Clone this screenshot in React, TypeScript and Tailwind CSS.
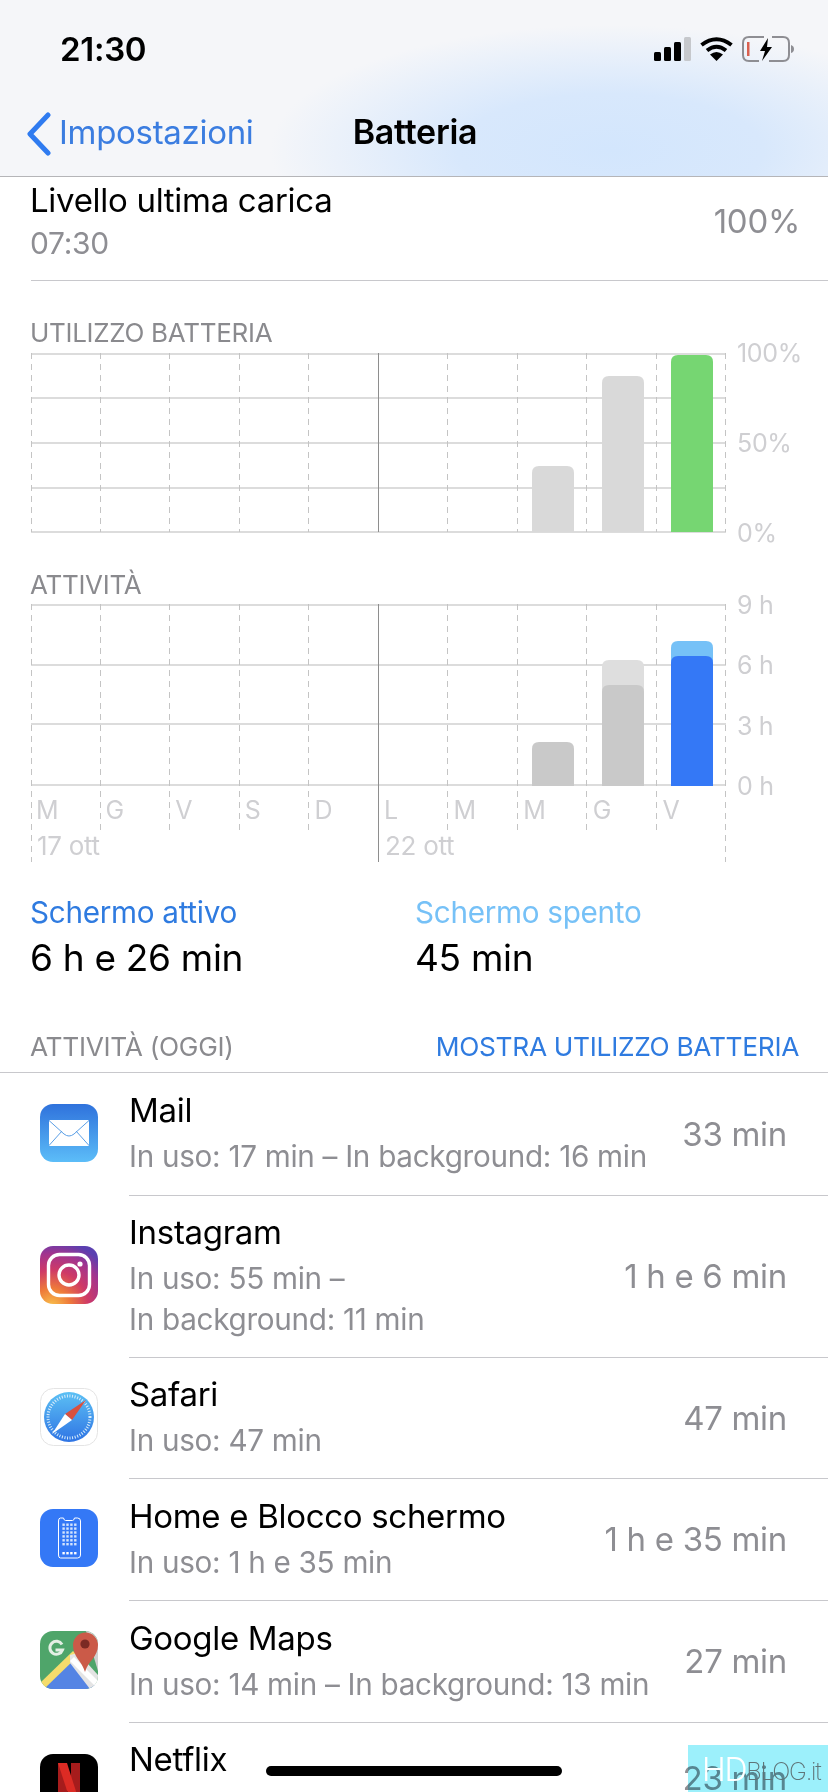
const days = ["M", "G", "V", "S", "D", "L", "M", "M", "G", "V"];

interface Bar {
  x: number;
  top: number;
  fill: string;
}

function Grid({ lines, bottom, tall }: { lines: number[]; bottom: number; tall?: boolean }) {
  return (
    <>
      {lines.map((y) => (
        <line key={y} x1="0" x2="695" y1={y} y2={y} stroke="#dcdcdc" strokeWidth="2" />
      ))}
      {Array.from({ length: 11 }).map((_, i) => {
        const x = Math.max(Math.round(i * 69.5) - 0.5, 0.5);
        const longLine = tall && (i === 0 || i === 10);
        if (i === 5) {
          return <line key={i} x1={x} x2={x} y1="0" y2={tall ? 258 : bottom} stroke="#8e8e8e" strokeWidth="1" />;
        }
        return (
          <line
            key={i}
            x1={x}
            x2={x}
            y1="0"
            y2={longLine ? 258 : tall ? 226 : bottom}
            stroke="#c4c4c4"
            strokeWidth="1"
            strokeDasharray="6 5"
          />
        );
      })}
    </>
  );
}

function BarShape({ x, top, fill, base }: Bar & { base: number }) {
  const r = 7;
  return (
    <path
      d={`M${x} ${base}V${top + r}Q${x} ${top} ${x + r} ${top}H${x + 42 - r}Q${x + 42} ${top} ${x + 42} ${top + r}V${base}Z`}
      fill={fill}
    />
  );
}

function BatteryChart() {
  return (
    <div className="flex h-[180px] pl-[31px]">
      <svg width="696" height="180" className="block shrink-0">
        <Grid lines={[1, 45, 90, 135, 179]} bottom={179} />
        <BarShape x={501} top={113} fill="#d9d9d9" base={179} />
        <BarShape x={571} top={23} fill="#d9d9d9" base={179} />
        <BarShape x={640} top={2} fill="#76d672" base={179} />
      </svg>
      <div className="ml-[10px] flex h-[202px] -mt-[11px] flex-col justify-between text-[25px] leading-[22px] text-[#cfcfd2]">
        <span>100%</span>
        <span>50%</span>
        <span>0%</span>
      </div>
    </div>
  );
}

function ActivityChart() {
  return (
    <div className="flex pl-[31px]">
      <div className="relative h-[258px] w-[696px] shrink-0">
        <svg width="696" height="258" className="absolute inset-0 block">
          <Grid lines={[1, 61, 120, 181]} bottom={258} tall />
          <BarShape x={501} top={138} fill="#c9c9c9" base={182} />
          <BarShape x={571} top={56} fill="#dedede" base={182} />
          <BarShape x={571} top={81} fill="#c9c9c9" base={182} />
          <BarShape x={640} top={37} fill="#76c1f7" base={182} />
          <BarShape x={640} top={52} fill="#3478f6" base={182} />
        </svg>
        <div className="relative grid grid-cols-10 pt-[191px] text-[25px] leading-[30px] text-[#cfcfd2]">
          {days.map((d, i) => (
            <span key={i} className="pl-[5px]">
              {d}
            </span>
          ))}
        </div>
        <div className="relative mt-[6px] grid grid-cols-2 text-[26px] leading-[30px] text-[#cfcfd2]">
          <span className="pl-[6px]">17 ott</span>
          <span className="pl-[6px]">22 ott</span>
        </div>
      </div>
      <div className="-mt-[10px] ml-[10px] flex h-[203px] flex-col justify-between text-[25px] leading-[22px] text-[#cfcfd2]">
        <span>9 h</span>
        <span>6 h</span>
        <span>3 h</span>
        <span>0 h</span>
      </div>
    </div>
  );
}

function MailIcon() {
  return (
    <svg viewBox="0 0 58 58" className="h-[58px] w-[58px]">
      <defs>
        <linearGradient id="mail" x1="0" y1="0" x2="0" y2="1">
          <stop offset="0" stopColor="#2f72dc" />
          <stop offset="1" stopColor="#5cbdf8" />
        </linearGradient>
      </defs>
      <rect width="58" height="58" rx="13" fill="url(#mail)" />
      <rect x="9" y="16" width="40" height="26" rx="1" fill="#fff" />
      <path d="M9 16.5L24 30Q29 34 34 30L49 16.5M9 41.5L22 27M49 41.5L36 27" fill="none" stroke="#5b9fe6" strokeWidth="1" />
    </svg>
  );
}

function InstagramIcon() {
  return (
    <svg viewBox="0 0 58 58" className="h-[58px] w-[58px]">
      <defs>
        <radialGradient id="ig" cx="0.2" cy="1.05" r="1.15">
          <stop offset="0" stopColor="#f9c34c" />
          <stop offset="0.28" stopColor="#ee7a3a" />
          <stop offset="0.55" stopColor="#cf3a66" />
          <stop offset="0.8" stopColor="#a2348f" />
          <stop offset="1" stopColor="#5a3fb0" />
        </radialGradient>
      </defs>
      <rect width="58" height="58" rx="13" fill="url(#ig)" />
      <rect x="8.5" y="8.5" width="41" height="41" rx="11" fill="none" stroke="#fff" strokeWidth="3.4" />
      <circle cx="29" cy="29" r="10" fill="none" stroke="#fff" strokeWidth="3.4" />
      <circle cx="40" cy="18" r="2.6" fill="#fff" />
    </svg>
  );
}

function SafariIcon() {
  return (
    <svg viewBox="0 0 58 58" className="h-[58px] w-[58px]">
      <defs>
        <linearGradient id="saf" x1="0" y1="0" x2="0" y2="1">
          <stop offset="0" stopColor="#5cc0f4" />
          <stop offset="1" stopColor="#2f74e4" />
        </linearGradient>
      </defs>
      <rect x="0.5" y="0.5" width="57" height="57" rx="13" fill="#fff" stroke="#e4e4e4" />
      <circle cx="29" cy="29" r="25" fill="url(#saf)" />
      <circle cx="29" cy="29" r="21" fill="none" stroke="#d6ecfb" strokeWidth="3" strokeDasharray="1 1.6" />
      <path d="M46 12L25 26L32 32Z" fill="#d9503f" />
      <path d="M12 46L25 26L32 32Z" fill="#fff" />
    </svg>
  );
}

function HomeIcon() {
  const dots: number[][] = [];
  for (let r = 0; r < 6; r++) {
    for (let c = 0; c < 4; c++) dots.push([22.4 + c * 3.9, 14.5 + r * 3.9]);
  }
  return (
    <svg viewBox="0 0 58 58" className="h-[58px] w-[58px]">
      <rect width="58" height="58" rx="13" fill="#3478f6" />
      <path
        d="M20.5 9H23.5Q24 11.5 25.5 11.5H32.5Q34 11.5 34.5 9H37.5Q40.5 9 40.5 12V46Q40.5 49 37.5 49H20.5Q18.5 49 18.5 46V12Q18.5 9 20.5 9Z"
        fill="none"
        stroke="#fff"
        strokeWidth="1"
      />
      {dots.map(([x, y], i) => (
        <rect key={i} x={x} y={y} width="2.4" height="2.4" fill="#d5e4fd" />
      ))}
      {[0, 1, 2, 3].map((c) => (
        <rect key={c} x={22.4 + c * 3.9} y="43" width="2.4" height="2.4" fill="#fff" />
      ))}
    </svg>
  );
}

function MapsIcon() {
  return (
    <svg viewBox="0 0 58 58" className="h-[58px] w-[58px]">
      <defs>
        <clipPath id="mapclip">
          <rect width="58" height="58" rx="13" />
        </clipPath>
      </defs>
      <g clipPath="url(#mapclip)">
        <rect width="58" height="58" fill="#4fa56a" />
        <path d="M30 24L58 58H4Z" fill="#5484e4" />
        <path d="M0 52L33 20L38 25L4 58H0Z" fill="#f4dc6c" />
        <path d="M30 24L38 22L58 44V58H50L30 32Z" fill="#e4e4e4" />
        <path d="M34 26L58 50V58L30 30Z" fill="#ffffff" />
        <path d="M46 0H58V40Z" fill="#d0d0d0" />
        <path d="M45 41C42 30 33 26 33 14A12.5 12.5 0 0 1 58 14C58 26 48 30 45 41Z" fill="#cb5a48" />
        <circle cx="45" cy="13" r="4.6" fill="#7b2a24" />
      </g>
      <path d="M22 13.5A6.5 6.5 0 1 0 22.5 19H15.5" fill="none" stroke="#e4efe4" strokeWidth="3" />
    </svg>
  );
}

function NetflixIcon() {
  return (
    <svg viewBox="0 0 58 58" className="h-[58px] w-[58px]">
      <rect width="58" height="58" rx="13" fill="#000" />
      <path d="M18 9H27V49L18 50Z" fill="#a61c1c" />
      <path d="M31 9H40V50L31 49Z" fill="#a61c1c" />
      <path d="M18 9H27L40 50L31 49Z" fill="#dc2b24" />
    </svg>
  );
}

const rows = [
  { name: "Mail", lines: ["In uso: 17 min – In background: 16 min"], value: "33 min", h: "h-[123px]", icon: <MailIcon /> },
  { name: "Instagram", lines: ["In uso: 55 min –", "In background: 11 min"], value: "1 h e 6 min", h: "h-[162px]", icon: <InstagramIcon /> },
  { name: "Safari", lines: ["In uso: 47 min"], value: "47 min", h: "h-[121px]", icon: <SafariIcon /> },
  { name: "Home e Blocco schermo", lines: ["In uso: 1 h e 35 min"], value: "1 h e 35 min", h: "h-[122px]", icon: <HomeIcon /> },
  { name: "Google Maps", lines: ["In uso: 14 min – In background: 13 min"], value: "27 min", h: "h-[122px]", icon: <MapsIcon /> },
];

function AppRow({ row }: { row: (typeof rows)[number] }) {
  return (
    <li className={`flex items-center pl-[40px] ${row.h}`}>
      <span className="-mt-[4px] w-[58px] shrink-0">{row.icon}</span>
      <div className="ml-[31px] flex h-full min-w-0 flex-1 items-center justify-between border-b border-[#c8c8cc] pr-[41px]">
        <div className="-mt-[1px] flex flex-col">
          <span className="text-[33px] leading-[40px] text-black">{row.name}</span>
          <span className="mt-[6px] text-[29.7px] leading-[41px] text-[#8e8e93]">
            {row.lines.map((l) => (
              <span key={l} className="block whitespace-nowrap">
                {l}
              </span>
            ))}
          </span>
        </div>
        <span className="text-[33px] leading-none text-[#8e8e93]">{row.value}</span>
      </div>
    </li>
  );
}

export default function App() {
  return (
    <div className="relative h-[1792px] w-[828px] overflow-hidden bg-white font-['Inter',sans-serif] tracking-[-0.3px]">
      <header className="h-[177px] border-b border-[#b5b5b8] bg-[#f5f6f9] bg-[radial-gradient(ellipse_340px_125px_at_610px_150px,#d3e6fd_0%,#d8e8fc_45%,rgba(245,246,249,0)_100%)]">
        <div className="flex h-[98px] items-center justify-between pl-[60px] pr-[34px]">
          <span className="text-[33px] font-semibold leading-none text-black">21:30</span>
          <div className="flex items-center gap-[9px]">
            <svg width="37" height="24" viewBox="0 0 37 24">
              <rect x="0" y="15" width="7" height="9" rx="1.5" fill="#000" />
              <rect x="10" y="10" width="7" height="14" rx="1.5" fill="#000" />
              <rect x="20" y="5" width="7" height="19" rx="1.5" fill="#000" />
              <rect x="30" y="0" width="7" height="24" rx="1.5" fill="#c6c8cc" />
            </svg>
            <svg width="33" height="24" viewBox="0 0 33 24">
              <path d="M1.5 8Q16.5 -3.5 31.5 8" fill="none" stroke="#000" strokeWidth="4" />
              <path d="M7 13.5Q16.5 6 26 13.5" fill="none" stroke="#000" strokeWidth="4" />
              <path d="M16.5 24L10 17.5Q16.5 12.5 23 17.5Z" fill="#000" />
            </svg>
            <svg width="52" height="26" viewBox="0 0 52 26">
              <path d="M22 1H7Q1 1 1 7V19Q1 25 7 25H17M30 1H41Q47 1 47 7V19Q47 25 41 25H27" fill="none" stroke="#8e8e93" strokeWidth="2" />
              <rect x="5" y="6" width="2.5" height="14" fill="#d9604f" />
              <path d="M26 2L18 15H23L20 25L30 11H25Z" fill="#000" />
              <path d="M49 9Q52 10 52 13Q52 16 49 17Z" fill="#8e8e93" />
            </svg>
          </div>
        </div>
        <nav className="relative flex h-[78px] items-start pl-[25px] pt-[14px]">
          <svg width="27" height="44" viewBox="0 0 27 44">
            <path d="M23 3L5 22L23 41" fill="none" stroke="#2f7bf0" strokeWidth="5" strokeLinecap="round" strokeLinejoin="round" />
          </svg>
          <span className="ml-[7px] text-[33px] leading-[40px] text-[#3b7de0]">Impostazioni</span>
          <span className="absolute left-[2px] right-0 top-[17px] text-center text-[34px] font-semibold leading-none text-black">
            Batteria
          </span>
        </nav>
      </header>

      <section className="flex h-[103px] items-center justify-between pl-[30px] pr-[28px]">
        <div className="-mt-[15px] flex flex-col">
          <span className="text-[33px] leading-[40px] text-black">Livello ultima carica</span>
          <span className="mt-[3px] text-[30px] leading-[40px] text-[#8e8e93]">07:30</span>
        </div>
        <span className="-mt-[16px] text-[33px] leading-[40px] text-[#8e8e93]">100%</span>
      </section>
      <div className="ml-[31px] h-px bg-[#c8c8cc]" />

      <h2 className="mt-[37px] pl-[30px] text-[26px] font-normal leading-[30px] text-[#8a8a8e]">UTILIZZO BATTERIA</h2>
      <div className="mt-[5px]">
        <BatteryChart />
      </div>

      <h2 className="mt-[37px] pl-[30px] text-[26px] font-normal leading-[30px] text-[#8a8a8e]">ATTIVITÀ</h2>
      <div className="mt-[4px]">
        <ActivityChart />
      </div>

      <div className="mt-[31px] flex pl-[30px]">
        <div className="w-[385px]">
          <div className="text-[29.7px] leading-[38px] text-[#2f7be0]">Schermo attivo</div>
          <div className="mt-[5px] text-[37px] leading-[44px] text-black">6 h e 26 min</div>
        </div>
        <div>
          <div className="text-[29.7px] leading-[38px] text-[#76c1f7]">Schermo spento</div>
          <div className="mt-[5px] text-[37px] leading-[44px] text-black">45 min</div>
        </div>
      </div>

      <div className="mt-[51px] flex h-[33px] items-center justify-between pl-[30px] pr-[29px] text-[26.3px] leading-none">
        <span className="text-[#8a8a8e]">ATTIVITÀ (OGGI)</span>
        <span className="text-[#2f7be0]">MOSTRA UTILIZZO BATTERIA</span>
      </div>
      <div className="mt-[8px] h-px bg-[#c8c8cc]" />

      <ul className="m-0 list-none p-0">
        {rows.map((row) => (
          <AppRow key={row.name} row={row} />
        ))}
        <li className="flex items-start pl-[40px] pt-[31px]">
          <span className="w-[58px] shrink-0">
            <NetflixIcon />
          </span>
          <div className="ml-[31px] flex flex-1 justify-between pr-[41px]">
            <span className="-mt-[15px] text-[33px] leading-[40px] text-black">Netflix</span>
            <span className="mt-[8px] text-[33px] leading-none text-[#8e8e93]">23 min</span>
          </div>
        </li>
      </ul>

      <div className="absolute bottom-0 right-0 h-[47px] w-[140px] bg-[#9cf0fb] mix-blend-multiply" />
      <div className="absolute bottom-0 right-0 flex h-[47px] w-[140px] items-end pb-[5px] pl-[14px] tracking-[-1.2px]">
        <span className="text-[32px] font-light leading-[34px] text-white">HD</span>
        <span className="text-[24px] font-extralight leading-[30px] text-[#5f7478]">BLOG.it</span>
      </div>
      <div className="absolute bottom-[16px] left-[266px] h-[10px] w-[296px] rounded-full bg-black" />
    </div>
  );
}
